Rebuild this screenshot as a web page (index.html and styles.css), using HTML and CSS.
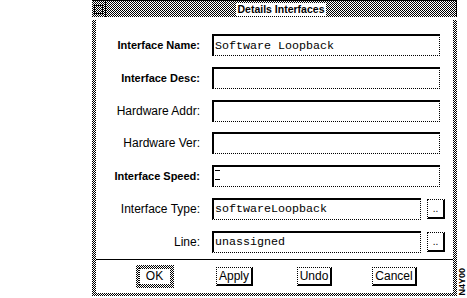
FILE: index.html
```html
<!DOCTYPE html>
<html>
<head>
<meta charset="utf-8">
<link rel="stylesheet" href="styles.css">
</head>
<body>
<div class="page">
  <div class="window">
    <div class="titlebar">
      <div class="closebox"><div class="closebox-inner"></div></div>
      <div class="title-wrap"><span class="title">Details Interfaces</span></div>
    </div>
    <div class="frame">
      <div class="inner">
        <div class="form">
          <div class="lbl b">Interface Name:</div>
          <div class="cell"><div class="field wide">Software Loopback</div></div>
          <div class="lbl b">Interface Desc:</div>
          <div class="cell"><div class="field wide"></div></div>
          <div class="lbl">Hardware Addr:</div>
          <div class="cell"><div class="field wide"></div></div>
          <div class="lbl">Hardware Ver:</div>
          <div class="cell"><div class="field wide"></div></div>
          <div class="lbl b">Interface Speed:</div>
          <div class="cell"><div class="field wide"><span class="cursor"></span></div></div>
          <div class="lbl">Interface Type:</div>
          <div class="cell"><div class="field">softwareLoopback</div><div class="more">..</div></div>
          <div class="lbl">Line:</div>
          <div class="cell"><div class="field">unassigned</div><div class="more">..</div></div>
        </div>
        <div class="sep"></div>
        <div class="buttons">
          <div class="okring"><div class="btn ok">OK</div></div>
          <div class="btn">Apply</div>
          <div class="btn">Undo</div>
          <div class="btn">Cancel</div>
        </div>
      </div>
    </div>
  </div>
  <div class="figid">N4Y00</div>
</div>
</body>
</html>
```
FILE: styles.css
```css
html, body {
  margin: 0;
  background: #fff;
  font-family: "Liberation Sans", Arial, sans-serif;
  color: #000;
}
.page {
  display: flex;
  width: 467px;
  height: 298px;
  padding-left: 92px;
  box-sizing: border-box;
}
.window {
  width: 365px;
  height: 296px;
  display: flex;
  flex-direction: column;
}
.titlebar {
  height: 17px;
  display: flex;
  box-sizing: border-box;
  border-top: 1px solid #000;
  border-right: 1px solid #000;
  background-image: conic-gradient(#000 25%, #fff 0 50%, #000 0 75%, #fff 0);
  background-size: 2px 2px;
}
.closebox {
  width: 13px;
  border-right: 1px solid #000;
  display: flex;
  align-items: center;
  justify-content: center;
}
.closebox-inner {
  width: 7px;
  height: 7px;
  border: 1px solid #000;
  background-image: conic-gradient(#000 25%, #fff 0 50%, #000 0 75%, #fff 0);
  background-size: 2px 2px;
}
.title-wrap {
  flex: 1;
  display: flex;
  justify-content: center;
  align-items: center;
}
.title {
  background: #fff;
  font-weight: bold;
  font-size: 10.5px;
  line-height: 13px;
  padding: 0 2px;
}
.frame {
  margin-top: 3px;
  flex: 1;
  display: flex;
  padding: 0 4px 3px;
  background-image: conic-gradient(#000 25%, #fff 0 50%, #000 0 75%, #fff 0);
  background-size: 2px 2px;
}
.inner {
  flex: 1;
  background: #fff;
  display: flex;
  flex-direction: column;
}
.form {
  display: grid;
  grid-template-columns: 104px 1fr;
  grid-auto-rows: 22px;
  column-gap: 12px;
  row-gap: 10.8px;
  padding: 14px 8px 0 0;
}
.lbl {
  text-align: right;
  font-size: 12px;
  align-self: center;
  white-space: nowrap;
}
.lbl.b {
  font-weight: bold;
  font-size: 11px;
}
.cell {
  display: flex;
  align-items: center;
  gap: 6px;
}
.field {
  flex: 1;
  height: 22px;
  box-sizing: border-box;
  border-top: 2px solid #000;
  border-left: 2px solid #000;
  border-right: 1px dotted #000;
  border-bottom: 1px dotted #000;
  font-family: "Liberation Mono", "Courier New", monospace;
  font-size: 11.67px;
  padding-left: 1px;
  display: flex;
  align-items: center;
  white-space: nowrap;
}
.field.wide {
  margin-right: 5px;
}
.cursor {
  width: 5px;
  height: 10px;
  box-sizing: border-box;
  border-top: 1px solid #000;
  border-bottom: 1px solid #000;
  margin-bottom: 3px;
}
.more {
  width: 18px;
  height: 20px;
  box-sizing: border-box;
  border-left: 1px dotted #000;
  border-top: 1px dotted #000;
  border-right: 2px solid #000;
  border-bottom: 2px solid #000;
  font-size: 10px;
  line-height: 10px;
  display: flex;
  align-items: flex-end;
  justify-content: center;
  padding-bottom: 3px;
}
.sep {
  height: 1px;
  background: #000;
  margin-top: 6px;
}
.buttons {
  flex: 1;
  display: grid;
  grid-template-columns: repeat(4, 80px);
  justify-content: center;
  align-items: center;
  justify-items: center;
}
.btn {
  height: 19px;
  box-sizing: border-box;
  padding: 0 2px;
  border-left: 1px dotted #000;
  border-top: 1px dotted #000;
  border-right: 2px solid #000;
  border-bottom: 2px solid #000;
  font-size: 12px;
  display: flex;
  align-items: center;
  justify-content: center;
}
.okring {
  padding: 3px;
  background-image: conic-gradient(#000 25%, #fff 0 50%, #000 0 75%, #fff 0);
  background-size: 2px 2px;
}
.btn.ok {
  width: 32px;
  height: 17px;
  background: #fff;
  border: 1px dotted #000;
}
.figid {
  writing-mode: vertical-rl;
  transform: rotate(180deg);
  font-size: 9px;
  font-weight: bold;
  align-self: flex-end;
  margin-bottom: 2px;
  width: 10px;
  line-height: 10px;
}
```
